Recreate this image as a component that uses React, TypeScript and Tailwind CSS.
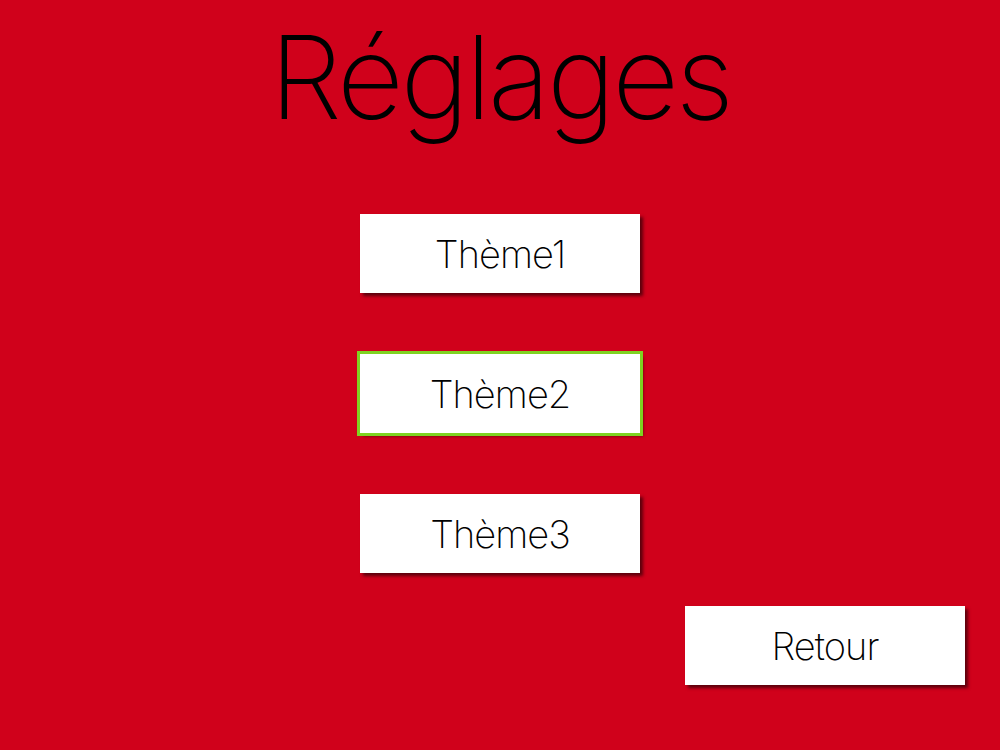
const font = { fontFamily: 'Inter, "Noto Sans", sans-serif' };

function ThemeButton({ label, selected = false }: { label: string; selected?: boolean }) {
  return (
    <button
      type="button"
      className={
        'w-[280px] h-[79px] bg-white text-black text-[38px] font-[250] tracking-[-0.025em] leading-none shadow-[3px_3px_3px_rgba(0,0,0,0.55)] ' +
        (selected ? 'outline-[3px] outline-solid outline-[#7ed321] outline-offset-0' : '')
      }
    >
      {label}
    </button>
  );
}

export default function App() {
  return (
    <div className="w-[1000px] h-[750px] bg-[#d0011b] flex flex-col items-center overflow-hidden" style={font}>
      <h1 className="mt-[19px] text-[116px] leading-none font-[220] text-black tracking-[-0.03em]">Réglages</h1>
      <div className="mt-[79px] flex flex-col items-center gap-[61px]">
        <ThemeButton label="Thème1" />
        <ThemeButton label="Thème2" selected />
        <ThemeButton label="Thème3" />
      </div>
      <div className="self-end mr-[35px] mt-[33px]">
        <ThemeButton label="Retour" />
      </div>
    </div>
  );
}
